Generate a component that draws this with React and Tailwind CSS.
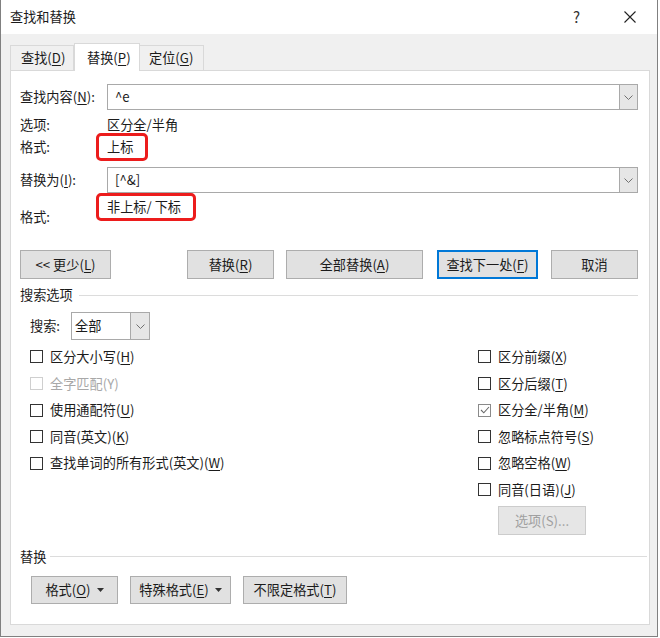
import React from 'react'

// Word "查找和替换" dialog, 替换 tab, with the search options expanded.

const U = ({ children }) => <span className="underline underline-offset-[2px]">{children}</span>

function Chevron() {
  return (
    <svg width="9" height="5" viewBox="0 0 9 5" fill="none">
      <path d="M0.5 0.5 L4.5 4.5 L8.5 0.5" stroke="#707070" strokeWidth="1" />
    </svg>
  )
}

function Combo({ value, className = '' }) {
  return (
    <div className={`flex h-[26px] border border-[#a9a9a9] bg-white ${className}`}>
      <span className="flex-1 pl-[7px] leading-[24px]">{value}</span>
      <span className="flex w-[18px] items-center justify-center border-l border-[#a9a9a9] bg-[#e6e6e6]">
        <Chevron />
      </span>
    </div>
  )
}

function Btn({ children, className = '', primary, disabled }) {
  const look = disabled
    ? 'border-[#cccccc] bg-[#e6e6e6] text-[#a0a0a0]'
    : primary
      ? 'border-[#0078d7] bg-[#e1e1e1] shadow-[inset_0_0_0_1px_#0078d7]'
      : 'border-[#adadad] bg-[#e1e1e1]'
  return (
    <div className={`flex items-center justify-center border ${look} ${className}`}>{children}</div>
  )
}

function Arrow() {
  return (
    <svg width="7" height="4" viewBox="0 0 7 4" className="ml-[6px]">
      <path d="M0 0 H7 L3.5 4 Z" fill="#333" />
    </svg>
  )
}

function Check({ checked, disabled, children }) {
  return (
    <div className="flex h-[26.6px] items-center gap-[7px]">
      <span
        className={`flex h-[13px] w-[13px] items-center justify-center border bg-white ${
          disabled ? 'border-[#cfcfcf]' : checked ? 'border-[#8a8a8a]' : 'border-[#333333]'
        }`}
      >
        {checked && (
          <svg width="10" height="8" viewBox="0 0 10 8" fill="none">
            <path d="M1 4 L3.8 6.8 L9 1" stroke="#6a6a6a" strokeWidth="1.1" />
          </svg>
        )}
      </span>
      <span className={disabled ? 'text-[#a8a8a8]' : ''}>{children}</span>
    </div>
  )
}

function Group({ title, lineStart }) {
  return (
    <div className="flex h-[22px] items-center">
      <span>{title}</span>
      <span className={`h-px flex-1 bg-[#dcdcdc] ${lineStart}`} />
    </div>
  )
}

function Marked({ children, className = '' }) {
  return (
    <span className={`relative inline-block h-[22px] leading-[22px] ${className}`}>
      {children}
      <span className="absolute -bottom-[3px] -left-[11px] -right-[15px] -top-[3px] rounded-[5px] border-[3px] border-[#ec1c1c]" />
    </span>
  )
}

export default function App() {
  return (
    <div className="h-[638px] w-[660px] bg-white font-['Microsoft_YaHei','Noto_Sans_CJK_SC',sans-serif] text-[13.2px] text-[#1b1b1b]">
      <div className="flex h-[637px] w-[658px] flex-col border-x border-b border-[#808080] bg-[#f0f0f0]">
        {/* title bar */}
        <div className="flex h-[34px] shrink-0 items-center bg-white pl-[9px]">
          <span className="flex-1">查找和替换</span>
          <span className="mr-[44px] text-[15px] text-[#333]">?</span>
          <svg width="12" height="12" viewBox="0 0 12 12" className="mr-[21px]">
            <path d="M0.5 0.5 L11.5 11.5 M11.5 0.5 L0.5 11.5" stroke="#222" strokeWidth="1.1" />
          </svg>
        </div>

        {/* tabs */}
        <div className="ml-[9px] mt-[9px] flex h-[27px] items-end">
          <div className="flex h-[25px] w-[64px] items-center border border-b-0 border-[#d9d9d9] pl-[10px]">
            查找(<U>D</U>)
          </div>
          <div className="relative z-10 -mb-px flex h-[28px] w-[66px] items-center border-x border-t border-[#d9d9d9] bg-white pl-[12px]">
            替换(<U>P</U>)
          </div>
          <div className="flex h-[25px] w-[64px] items-center border border-b-0 border-l-0 border-[#d9d9d9] pl-[9px]">
            定位(<U>G</U>)
          </div>
        </div>

        {/* panel */}
        <div className="ml-[9px] flex h-[555px] w-[640px] flex-col border border-[#d9d9d9] bg-white pl-[9px] pr-[11px] pt-[13px]">
          <div className="flex items-center">
            <span className="w-[87px]">查找内容(<U>N</U>):</span>
            <Combo value="^e" className="flex-1" />
          </div>
          <div className="mt-[4px] flex h-[22px] items-center">
            <span className="w-[87px]">选项:</span>
            <span>区分全/半角</span>
          </div>
          <div className="flex h-[22px] items-center">
            <span className="w-[87px]">格式:</span>
            <Marked>上标</Marked>
          </div>
          <div className="mt-[9px] flex items-center">
            <span className="w-[87px]">替换为(<U>I</U>):</span>
            <Combo value="[^&]" className="flex-1" />
          </div>
          <div className="flex h-[35px] items-start">
            <span className="mt-[13px] w-[87px] leading-[22px]">格式:</span>
            <Marked className="mt-[3px]">非上标/ 下标</Marked>
          </div>

          <div className="mt-[22px] flex h-[29px]">
            <Btn className="w-[91px]">&lt;&lt; 更少(<U>L</U>)</Btn>
            <Btn className="ml-[76px] w-[87px]">替换(<U>R</U>)</Btn>
            <Btn className="ml-[12px] w-[137px]">全部替换(<U>A</U>)</Btn>
            <Btn primary className="ml-[14px] w-[101px]">查找下一处(<U>F</U>)</Btn>
            <Btn className="ml-[13px] w-[87px]">取消</Btn>
          </div>

          <div className="mt-[5px]">
            <Group title="搜索选项" lineStart="ml-[6px]" />
          </div>

          <div className="mt-[6px] flex items-center pl-[10px]">
            <span className="w-[41px]">搜索:</span>
            <div className="flex h-[28px] w-[79px] border border-[#a9a9a9] bg-white">
              <span className="flex-1 pl-[3px] leading-[26px]">全部</span>
              <span className="flex w-[19px] items-center justify-center border-l border-[#a9a9a9] bg-[#e6e6e6]">
                <Chevron />
              </span>
            </div>
          </div>

          <div className="mt-[3.7px] flex items-start pl-[10px]">
            <div className="w-[448px]">
              <Check>区分大小写(<U>H</U>)</Check>
              <Check disabled>全字匹配(Y)</Check>
              <Check>使用通配符(<U>U</U>)</Check>
              <Check>同音(英文)(<U>K</U>)</Check>
              <Check>查找单词的所有形式(英文)(<U>W</U>)</Check>
            </div>
            <div className="flex flex-col">
              <Check>区分前缀(<U>X</U>)</Check>
              <Check>区分后缀(<U>T</U>)</Check>
              <Check checked>区分全/半角(<U>M</U>)</Check>
              <Check>忽略标点符号(<U>S</U>)</Check>
              <Check>忽略空格(<U>W</U>)</Check>
              <Check>同音(日语)(<U>J</U>)</Check>
              <Btn disabled className="ml-[20px] mt-[2.7px] h-[29px] w-[88px]">选项(S)...</Btn>
            </div>
          </div>

          <div className="mt-[11px] -mr-[9px]">
            <Group title="替换" lineStart="ml-[4px]" />
          </div>

          <div className="mt-[8px] flex h-[28px] pl-[11px]">
            <Btn className="w-[87px]">格式(<U>O</U>)<Arrow /></Btn>
            <Btn className="ml-[12px] w-[101px]">特殊格式(<U>E</U>)<Arrow /></Btn>
            <Btn className="ml-[12px] w-[104px]">不限定格式(<U>T</U>)</Btn>
          </div>
        </div>
      </div>
    </div>
  )
}
